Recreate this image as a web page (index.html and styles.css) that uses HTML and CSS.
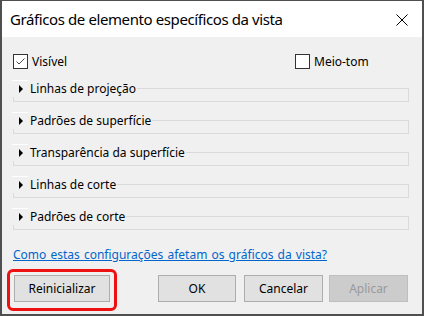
FILE: index.html
```html
<!DOCTYPE html>
<html lang="pt">
<head>
<meta charset="utf-8">
<title>Gráficos de elemento específicos da vista</title>
<link rel="stylesheet" href="styles.css">
</head>
<body>
<div class="window">
  <div class="titlebar">
    <span class="title">Gráficos de elemento específicos da vista</span>
    <span class="close"><svg width="12" height="12" viewBox="0 0 12 12"><path d="M0.5 0.5 L11.5 11.5 M11.5 0.5 L0.5 11.5" stroke="#000" stroke-width="1" fill="none"/></svg></span>
  </div>
  <div class="content">
    <div class="checks">
      <label class="chk"><span class="box"><svg width="13" height="13" viewBox="0 0 13 13"><path d="M2.5 6.5 L5 9 L10.5 3.5" stroke="#4a4a4a" stroke-width="1" fill="none"/></svg></span>Visível</label>
      <label class="chk"><span class="box"></span>Meio-tom</label>
    </div>
    <div class="groups">
      <div class="group"><div class="box-line"></div><div class="legend"><span class="tri"></span>Linhas de projeção</div></div>
      <div class="group"><div class="box-line"></div><div class="legend"><span class="tri"></span>Padrões de superfície</div></div>
      <div class="group"><div class="box-line"></div><div class="legend"><span class="tri"></span>Transparência da superfície</div></div>
      <div class="group"><div class="box-line"></div><div class="legend"><span class="tri"></span>Linhas de corte</div></div>
      <div class="group"><div class="box-line"></div><div class="legend"><span class="tri"></span>Padrões de corte</div></div>
    </div>
    <a class="help" href="#">Como estas configurações afetam os gráficos da vista?</a>
    <div class="buttons">
      <span class="highlight"><button class="btn reset">Reinicializar</button></span>
      <button class="btn ok">OK</button>
      <button class="btn cancel">Cancelar</button>
      <button class="btn apply" disabled>Aplicar</button>
    </div>
  </div>
</div>
</body>
</html>
```

FILE: styles.css
```css
html, body {
  margin: 0;
  padding: 0;
}
body {
  width: 424px;
  height: 316px;
  overflow: hidden;
  font-family: "Noto Sans", "Open Sans", sans-serif;
  font-size: 12px;
  color: #000;
}
.window {
  box-sizing: border-box;
  width: 424px;
  height: 316px;
  border-style: solid;
  border-color: #4f4f4f;
  border-width: 1px 2px 2px 2px;
  display: flex;
  flex-direction: column;
  background: #f0f0f0;
}
.titlebar {
  height: 36px;
  background: #fff;
  display: flex;
  align-items: center;
  padding: 0 14px 0 8px;
  flex: none;
}
.title {
  font-size: 15px;
  letter-spacing: -0.4px;
  line-height: 20px;
  flex: 1;
  margin-top: -1px;
}
.close {
  width: 12px;
  height: 12px;
  display: flex;
  margin-top: 1px;
}
.content {
  flex: 1;
  padding: 17px 13px 0 11px;
  display: flex;
  flex-direction: column;
}
.checks {
  display: grid;
  grid-template-columns: 1fr 114px;
  height: 15px;
}
.chk {
  display: flex;
  align-items: center;
  gap: 4px;
  line-height: 15px;
}
.box {
  box-sizing: border-box;
  width: 15px;
  height: 15px;
  border: 1px solid #333;
  background: #fff;
  display: flex;
  flex: none;
}
.groups {
  margin-top: 11px;
  display: flex;
  flex-direction: column;
  gap: 10px;
}
.group {
  display: grid;
  margin-left: -1px;
}
.group > * {
  grid-area: 1 / 1;
}
.box-line {
  margin-top: 8px;
  height: 14px;
  box-sizing: border-box;
  border: 1px solid #dadada;
  margin-left: 1px;
}
.legend {
  justify-self: start;
  align-self: start;
  height: 17px;
  background: #f0f0f0;
  display: flex;
  align-items: center;
  padding-right: 1px;
  line-height: 17px;
  background-image: linear-gradient(#fff, #fff);
  background-repeat: no-repeat;
  background-size: 16px 1px;
  background-position: 0 0;
}
.tri {
  width: 0;
  height: 0;
  border-style: solid;
  border-width: 4px 0 4px 4px;
  border-color: transparent transparent transparent #000;
  margin: 0 7px 0 7px;
}
.help {
  margin-top: 17px;
  line-height: 16px;
  word-spacing: 1px;
  color: #0066cc;
  text-decoration: underline;
  align-self: flex-start;
}
.buttons {
  margin-top: 12px;
  display: flex;
  align-items: flex-start;
}
.btn {
  box-sizing: border-box;
  height: 27px;
  font-family: inherit;
  font-size: 12px;
  background: #e1e1e1;
  border: 1px solid #adadad;
  color: #000;
  padding: 0;
  margin: 0;
}
.highlight {
  position: relative;
  display: flex;
  margin-left: 1px;
}
.highlight::after {
  content: "";
  position: absolute;
  left: -7px;
  right: -7px;
  top: -6px;
  bottom: -9px;
  border: 3px solid #ee1111;
  border-radius: 6px;
}
.reset { width: 96px; }
.ok { width: 78px; margin-left: 48px; }
.cancel { width: 79px; margin-left: 8px; }
.apply {
  width: 79px;
  margin-left: 6px;
  background: #cccccc;
  border-color: #bfbfbf;
  color: #9a9a9a;
}
```
